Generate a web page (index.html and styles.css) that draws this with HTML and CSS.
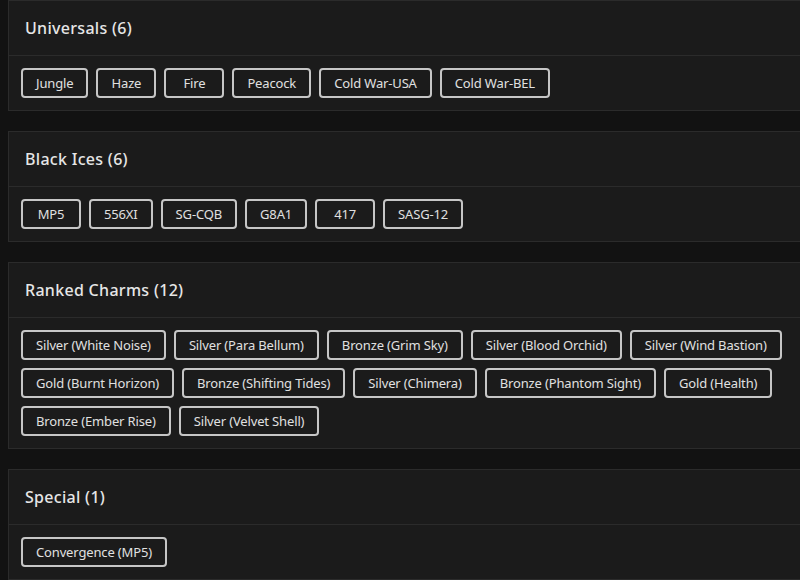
FILE: index.html
```html
<!DOCTYPE html>
<html lang="en">
<head>
<meta charset="utf-8">
<title>Collection</title>
<link rel="stylesheet" href="styles.css">
</head>
<body>
<main class="page">
  <section class="card">
    <header class="card-header"><h2 class="card-title">Universals (6)</h2></header>
    <div class="card-body">
      <button class="tag">Jungle</button>
      <button class="tag">Haze</button>
      <button class="tag">Fire</button>
      <button class="tag">Peacock</button>
      <button class="tag">Cold War-USA</button>
      <button class="tag">Cold War-BEL</button>
    </div>
  </section>
  <section class="card">
    <header class="card-header"><h2 class="card-title">Black Ices (6)</h2></header>
    <div class="card-body">
      <button class="tag">MP5</button>
      <button class="tag">556XI</button>
      <button class="tag">SG-CQB</button>
      <button class="tag">G8A1</button>
      <button class="tag">417</button>
      <button class="tag">SASG-12</button>
    </div>
  </section>
  <section class="card">
    <header class="card-header"><h2 class="card-title">Ranked Charms (12)</h2></header>
    <div class="card-body">
      <button class="tag">Silver (White Noise)</button>
      <button class="tag">Silver (Para Bellum)</button>
      <button class="tag">Bronze (Grim Sky)</button>
      <button class="tag">Silver (Blood Orchid)</button>
      <button class="tag">Silver (Wind Bastion)</button>
      <button class="tag">Gold (Burnt Horizon)</button>
      <button class="tag">Bronze (Shifting Tides)</button>
      <button class="tag">Silver (Chimera)</button>
      <button class="tag">Bronze (Phantom Sight)</button>
      <button class="tag">Gold (Health)</button>
      <button class="tag">Bronze (Ember Rise)</button>
      <button class="tag">Silver (Velvet Shell)</button>
    </div>
  </section>
  <section class="card">
    <header class="card-header"><h2 class="card-title">Special (1)</h2></header>
    <div class="card-body">
      <button class="tag">Convergence (MP5)</button>
    </div>
  </section>
</main>
</body>
</html>
```
FILE: styles.css
```css
html, body {
  margin: 0;
  padding: 0;
  background: #121212;
  overflow: hidden;
}
body {
  font-family: "Noto Sans", "Liberation Sans", sans-serif;
  color: #e2e2e2;
}
.page {
  display: flex;
  flex-direction: column;
  gap: 20px;
  padding: 0 0 0 8px;
}
.card {
  background: #1b1b1b;
  border: 1px solid #2b2b2b;
  border-right: 0;
}
.card-header {
  height: 54px;
  display: flex;
  align-items: center;
  padding: 0 16px;
  border-bottom: 1px solid #2b2b2b;
}
.card-title {
  margin: 0;
  font-size: 16px;
  font-weight: 500;
  letter-spacing: 0.3px;
  color: #e6e6e6;
}
.card-body {
  display: flex;
  flex-wrap: wrap;
  gap: 8px;
  padding: 12px 4px 12px 12px;
}
.tag {
  box-sizing: border-box;
  height: 30px;
  min-width: 60px;
  margin: 0;
  padding: 0 13px;
  font-family: inherit;
  font-size: 13px;
  line-height: 26px;
  letter-spacing: -0.15px;
  color: #e0e0e0;
  background: transparent;
  border: 2px solid #c6c6c6;
  border-radius: 4px;
  text-align: center;
  white-space: nowrap;
}
```
